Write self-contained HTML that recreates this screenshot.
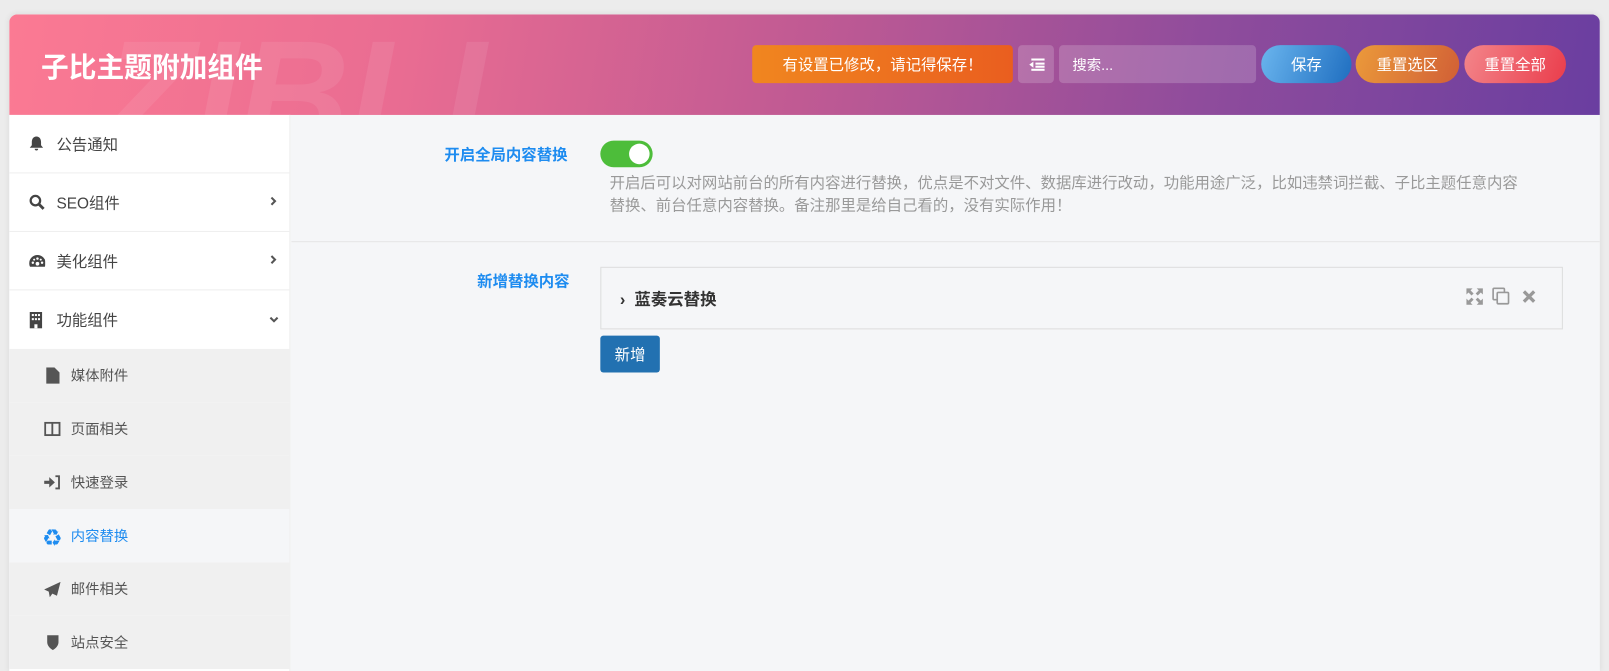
<!DOCTYPE html>
<html><head><meta charset="utf-8"><style>
*{box-sizing:border-box;margin:0;padding:0}
body{width:1609px;height:654px;background:#ececec;font-family:"Liberation Sans","Noto Sans CJK SC",sans-serif;overflow:hidden;position:relative}
.sc{position:absolute;left:0;top:0;width:1568px;height:638px;transform:scale(1.0262);transform-origin:0 0}
.wrap{position:absolute;left:9px;top:14px;width:1550px;height:640px;background:#f5f6f8;border-radius:8px 8px 0 0;overflow:hidden;box-shadow:0 0 6px rgba(0,0,0,.08)}
.hd{position:absolute;left:0;top:0;width:100%;height:98px;background:linear-gradient(100deg,#fb7a93 0%,#e96c92 25%,#c05a93 50%,#8f4c9c 75%,#6a3ea0 100%);overflow:hidden}
.wm{position:absolute;left:90px;top:-8px;font:italic bold 150px "Liberation Sans",sans-serif;color:rgba(255,255,255,.08);letter-spacing:0px}
.title{position:absolute;left:31px;top:30px;color:#fff;font-size:27px;font-weight:bold}
.b{position:absolute;top:30px;height:37px;color:#fff;font-size:15px;display:flex;align-items:center;justify-content:center;border-radius:4px}
.sb{position:absolute;left:0;top:98px;width:274px;height:542px;background:#fff;border-right:1px solid #eee}
.it{height:57px;display:flex;align-items:center;padding-left:19px;font-size:15px;color:#444;border-bottom:1px solid #eee;position:relative}
.it .ic{width:16px;height:16px;margin-right:11px;display:inline-flex;align-items:center}
.sub{height:52px;display:flex;align-items:center;padding-left:34px;font-size:14px;color:#555;background:#f0f0f0}
.sub .ic{width:16px;margin-right:10px;display:inline-flex;justify-content:center;color:#555}
.arr{position:absolute;right:12px;top:22px}
</style></head><body>
<div class="sc">
<div class="wrap">
<div class="hd">
<div class="wm">ZIBLL</div>
<div class="title">子比主题附加组件</div>
<div class="b" style="left:724px;width:254px;background:linear-gradient(90deg,#f0861f,#ea5e1f)">有设置已修改，请记得保存！</div>
<div class="b" style="left:983px;width:35px;background:rgba(255,255,255,.18)"><svg width="16" height="14"><rect x="3" y="1" width="13" height="2" fill="#fff"/><rect x="7" y="5" width="9" height="2" fill="#fff"/><rect x="7" y="8" width="9" height="2" fill="#fff"/><rect x="3" y="11" width="13" height="2" fill="#fff"/><path d="M5 4v6L1 7z" fill="#fff"/></svg></div>
<div class="b" style="left:1023px;width:192px;background:rgba(255,255,255,.18);justify-content:flex-start;padding-left:13px;font-size:14px">搜索...</div>
<div class="b" style="left:1220px;width:88px;border-radius:19px;background:linear-gradient(110deg,#6ab5ee,#1f6ec0)">保存</div>
<div class="b" style="left:1312px;width:101px;border-radius:19px;background:linear-gradient(110deg,#eb9a3a,#d15f36)">重置选区</div>
<div class="b" style="left:1418px;width:99px;border-radius:19px;background:linear-gradient(110deg,#f3858a,#ea3d4c)">重置全部</div>
</div>
<div class="sb">
<div class="it"><span class="ic"><svg width="15" height="16"><path d="M7.5 1c-3 0-4.5 2.5-4.5 5.5v3L1 12h13l-2-2.5v-3C12 3.5 10.5 1 7.5 1z M5.8 13a1.7 1.7 0 003.4 0z" fill="#444"/></svg></span>公告通知</div>
<div class="it"><span class="ic"><svg width="16" height="16"><circle cx="6.5" cy="6.5" r="4.6" fill="none" stroke="#444" stroke-width="2.2"/><path d="M10 10l4.5 4.5" stroke="#444" stroke-width="2.8"/></svg></span>SEO组件<svg class="arr" width="7" height="10"><path d="M1.5 1.5L5 5 1.5 8.5" fill="none" stroke="#555" stroke-width="2"/></svg></div>
<div class="it"><span class="ic"><svg width="17" height="15"><path d="M8.5 1.5a8 8 0 00-8 8c0 2 .6 3.5 1.2 3.5h13.6c.6 0 1.2-1.5 1.2-3.5a8 8 0 00-8-8z" fill="#444"/><circle cx="8.5" cy="10" r="1.8" fill="#fff"/><circle cx="4" cy="9" r="1.2" fill="#fff"/><circle cx="13" cy="9" r="1.2" fill="#fff"/><circle cx="8.5" cy="5" r="1.2" fill="#fff"/><circle cx="5.3" cy="6" r="1" fill="#fff"/><circle cx="11.7" cy="6" r="1" fill="#fff"/></svg></span>美化组件<svg class="arr" width="7" height="10"><path d="M1.5 1.5L5 5 1.5 8.5" fill="none" stroke="#555" stroke-width="2"/></svg></div>
<div class="it" style="border-bottom:none"><span class="ic"><svg width="14" height="16"><rect x="1" y="0" width="12" height="16" fill="#444"/><g fill="#fff"><rect x="3" y="2" width="2" height="2"/><rect x="6" y="2" width="2" height="2"/><rect x="9" y="2" width="2" height="2"/><rect x="3" y="6" width="2" height="2"/><rect x="6" y="6" width="2" height="2"/><rect x="9" y="6" width="2" height="2"/><rect x="5.5" y="12" width="3" height="4"/></g></svg></span>功能组件<svg class="arr" style="top:25px;right:10px" width="10" height="7"><path d="M1.5 1.5L5 5 8.5 1.5" fill="none" stroke="#555" stroke-width="2"/></svg></div>
<div class="sub"><span class="ic"><svg width="13" height="16"><path d="M0 0h8l5 5v11H0z" fill="#555"/></svg></span>媒体附件</div>
<div class="sub"><span class="ic"><svg width="16" height="14"><rect x="1" y="1" width="14" height="12" fill="none" stroke="#555" stroke-width="1.8"/><path d="M8 1v12" stroke="#555" stroke-width="1.8"/></svg></span>页面相关</div>
<div class="sub"><span class="ic"><svg width="16" height="14"><path d="M0 5.5h5V2l5.5 5L5 12V8.5H0z" fill="#555"/><path d="M11 1h3.5v12H11" fill="none" stroke="#555" stroke-width="1.8"/></svg></span>快速登录</div>
<div class="sub" style="background:#f5f6f8;color:#1e8cf0"><span class="ic" style="color:#1e8cf0;font-size:17px">♻</span>内容替换</div>
<div class="sub"><span class="ic"><svg width="16" height="15"><path d="M16 0L0 7.5l4.5 2 1 5.5 2.5-3.5 4.5 2z" fill="#555"/></svg></span>邮件相关</div>
<div class="sub"><span class="ic"><svg width="13" height="16"><path d="M1 1h11v7c0 4.5-5.5 7.5-5.5 7.5S1 12.5 1 8z" fill="#555"/></svg></span>站点安全</div>
</div>
<div style="position:absolute;left:275px;top:98px;right:0;height:124px;border-bottom:1px solid #e6e6e6"></div>
<div style="position:absolute;left:424px;top:126px;color:#1e8cf0;font-size:15px;font-weight:bold">开启全局内容替换</div>
<div style="position:absolute;left:576px;top:123px;width:51px;height:26px;border-radius:13px;background:#4dbd3a"><div style="position:absolute;right:3px;top:3px;width:20px;height:20px;border-radius:50%;background:#fff"></div></div>
<div style="position:absolute;left:585px;top:154px;width:895px;color:#999;font-size:15px;line-height:22px">开启后可以对网站前台的所有内容进行替换，优点是不对文件、数据库进行改动，功能用途广泛，比如违禁词拦截、子比主题任意内容替换、前台任意内容替换。备注那里是给自己看的，没有实际作用！</div>
<div style="position:absolute;left:456px;top:249px;color:#1e8cf0;font-size:15px;font-weight:bold">新增替换内容</div>
<div style="position:absolute;left:576px;top:246px;width:938px;height:61px;border:1px solid #ddd;background:#f5f6f8">
<div style="position:absolute;left:18px;top:17px;font-size:16px;font-weight:bold;color:#333">›&nbsp; 蓝奏云替换</div>
<svg style="position:absolute;right:22px;top:19px" width="72" height="18" viewBox="0 0 72 18">
<g fill="#999"><path d="M1 1h6L5 3l3 3-2 2-3-3-2 2zM17 1v6l-2-2-3 3-2-2 3-3-2-2zM1 17v-6l2 2 3-3 2 2-3 3 2 2zM17 17h-6l2-2-3-3 2-2 3 3 2-2z"/></g>
<g fill="none" stroke="#999" stroke-width="1.6"><rect x="27" y="1" width="11" height="11" rx="1"/><rect x="31" y="5" width="11" height="11" rx="1" fill="#f5f6f8"/></g>
<path d="M57 4l10 10M67 4L57 14" stroke="#999" stroke-width="3.2"/>
</svg>
</div>
<div style="position:absolute;left:576px;top:313px;width:58px;height:36px;background:#2271b1;border-radius:3px;color:#fff;font-size:15px;display:flex;align-items:center;justify-content:center">新增</div>
</div>
</div>
</body></html>
